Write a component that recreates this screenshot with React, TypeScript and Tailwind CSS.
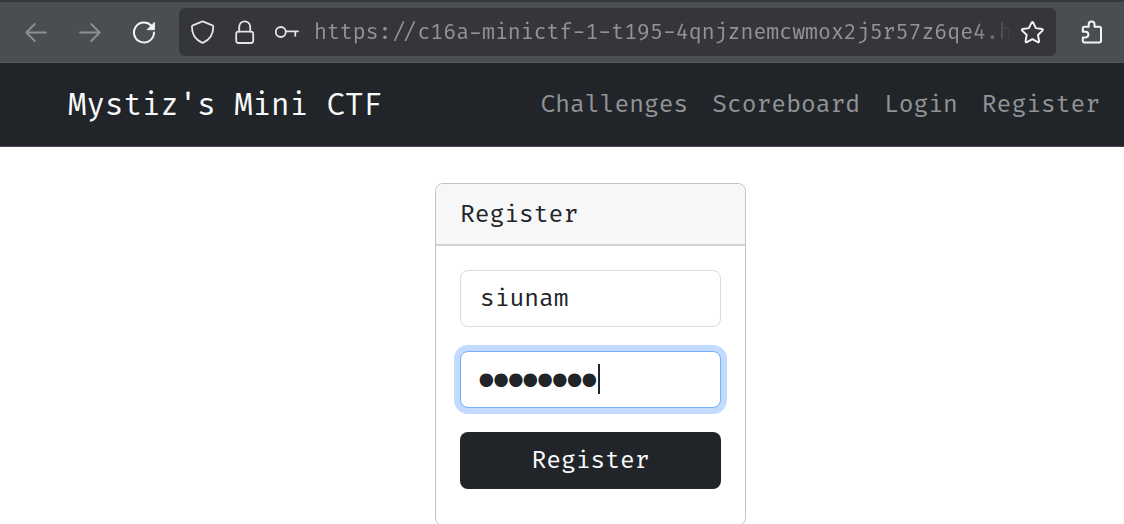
import type { ReactNode } from "react";

function Icon({ children }: { children: ReactNode }) {
  return (
    <svg
      viewBox="0 0 24 24"
      className="size-6 shrink-0"
      fill="none"
      stroke="currentColor"
      strokeWidth="1.8"
      strokeLinecap="round"
      strokeLinejoin="round"
      aria-hidden="true"
    >
      {children}
    </svg>
  );
}

function BrowserToolbar() {
  return (
    <header className="flex h-[63px] shrink-0 items-center border-t-2 border-b border-t-[#34383b] border-b-[#54575b] bg-[#4a4e52] pr-5 pl-6 text-[#f4f4f6]">
      <div className="flex items-center gap-[30px]">
        <button type="button" aria-label="Back" className="text-[#8d9092]">
          <Icon>
            <path d="M22 12.5H2.5M10.8 4 2.3 12.5l8.5 8.5" />
          </Icon>
        </button>
        <button type="button" aria-label="Forward" className="text-[#8d9092]">
          <Icon>
            <path d="M2 12.5h19.5M13.2 4l8.5 8.5-8.5 8.5" />
          </Icon>
        </button>
        <button type="button" aria-label="Reload">
          <Icon>
            <path d="M19.3 5.7A10 10 0 1 0 22 12.6" strokeWidth="2" />
            <path d="M22.5 2.5v7.2h-7.2z" fill="currentColor" strokeWidth="0.8" />
          </Icon>
        </button>
      </div>
      <div className="mr-6 ml-[23px] flex h-12 min-w-0 flex-1 items-center rounded-md bg-[#35363a] px-3">
        <div className="flex items-center gap-[18px] text-[#e4e4e6]">
          <Icon>
            <path d="M11.600 1.300 21.400 5.300c.6.3.9.7.9 1.300 0 7.400-3.700 13.300-10.100 16-.4.2-.8.2-1.200 0C4.600 19.900.9 14 .9 6.600c0-.6.3-1 .9-1.300z" />
          </Icon>
          <Icon>
            <rect x="3.200" y="11.700" width="17" height="11.300" rx="2.200" />
            <path d="M6.200 11.500V6.800a5.500 5.500 0 0 1 11 0v4.700" />
          </Icon>
          <Icon>
            <circle cx="5.800" cy="12" r="5" />
            <path d="M11 11.300h12M20.300 11.500v4.300" />
          </Icon>
        </div>
        <input
          type="text"
          readOnly
          aria-label="Address"
          value="https://c16a-minictf-1-t195-4qnjznemcwmox2j5r57z6qe4.h"
          className="ml-[15px] min-w-0 flex-1 bg-transparent mask-r-from-[95%] pt-0.5 font-['Fira_Code','Liberation_Mono',monospace] text-[21px] text-[#929398] outline-none"
        />
        <button type="button" aria-label="Bookmark this page" className="ml-2">
          <Icon>
            <path
              d="M11.700 2.400c.3-.6 1.100-.6 1.400 0l2.700 5.700 6.200.9c.8.1 1.100 1 .5 1.600l-4.500 4.400 1.100 6.200c.1.800-.7 1.300-1.300.9L12.400 19.200l-5.500 2.900c-.6.4-1.400-.1-1.300-.9l1.100-6.200-4.500-4.400c-.6-.6-.3-1.500.5-1.600l6.200-.9z"
              strokeWidth="1.9"
            />
          </Icon>
        </button>
      </div>
      <button type="button" aria-label="Extensions">
        <Icon>
          <path
            d="M8.700 6.800V4.300a2.900 2.900 0 0 1 5.800 0v2.500h4.800c1 0 1.700.7 1.700 1.700v12.300c0 1-.7 1.700-1.700 1.700H4.500c-1 0-1.700-.7-1.700-1.700v-3.400h2.800a2.800 2.800 0 0 0 0-5.600H2.800V8.500c0-1 .7-1.700 1.700-1.700z"
            strokeWidth="2"
          />
        </Icon>
      </button>
    </header>
  );
}

const links = ["Challenges", "Scoreboard", "Login", "Register"];

function Navbar() {
  return (
    <nav className="flex h-[84px] shrink-0 items-center justify-between border-b border-[#4a454d] bg-[#212529] pr-6 pl-[68px]">
      <a href="#home" className="pt-0.5 text-[30px] text-[#f8f9fa]">
        Mystiz's Mini CTF
      </a>
      <ul className="flex gap-6 text-2xl text-[#919396]">
        {links.map((label) => (
          <li key={label}>
            <a href={"#" + label.toLowerCase()}>{label}</a>
          </li>
        ))}
      </ul>
    </nav>
  );
}

function RegisterCard() {
  return (
    <section className="mx-auto w-[311px] rounded-lg border border-[#c3c3c3] text-2xl text-[#212529]">
      <h1 className="rounded-t-lg border-b-2 border-[#d2d2d2] bg-[#f7f7f7] px-6 pt-[13px] pb-[11px] leading-9">
        Register
      </h1>
      <form className="flex flex-col gap-6 px-6 pt-6 pb-9">
        <input
          type="text"
          aria-label="Username"
          defaultValue="siunam"
          className="h-[57px] w-full rounded-lg border border-[#d9dce0] bg-white px-[19px] outline-none"
        />
        <div className="relative">
          <input
            type="password"
            aria-label="Password"
            defaultValue="password"
            className="block h-[57px] w-full rounded-lg border border-[#78aefc] bg-white px-[18px] font-['Liberation_Sans',sans-serif] text-[42px] ring-6 ring-[#c2dbfe] outline-none [-webkit-text-stroke:2px_#212529]"
          />
          <span className="absolute top-[13px] left-[138px] h-[30px] w-0.5 bg-[#212529]" />
        </div>
        <button type="button" className="h-[57px] w-full rounded-lg bg-[#212529] text-[#f8f9fa]">
          Register
        </button>
      </form>
    </section>
  );
}

export default function App() {
  return (
    <div className="flex h-screen flex-col overflow-hidden bg-white font-['Fira_Code','Liberation_Mono',monospace]">
      <BrowserToolbar />
      <Navbar />
      <main className="pt-9 pl-[57px]">
        <RegisterCard />
      </main>
    </div>
  );
}
